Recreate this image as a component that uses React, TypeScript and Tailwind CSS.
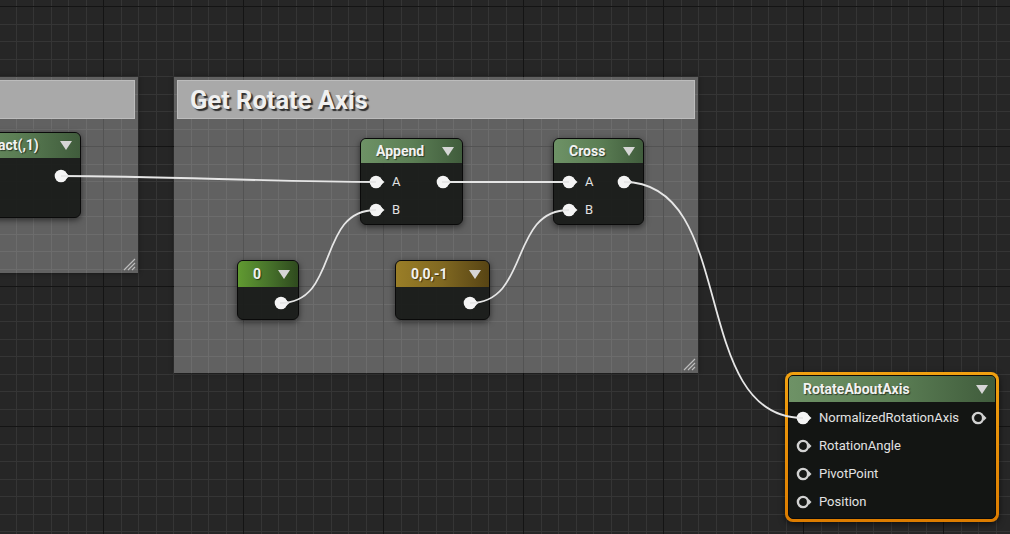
import React from 'react';

const W = 1010;
const H = 534;

// grid lines of the graph canvas (17.5px cells, a darker line every 8 cells)
const mod8 = (k: number) => ((k % 8) + 8) % 8;
const gridX = Array.from({ length: 60 }, (_, i) => i - 6).map((k) => ({ k, p: Math.round(103.3 + k * 17.5) + 0.5 }));
const gridY = Array.from({ length: 32 }, (_, i) => i).map((k) => ({ k, p: Math.round(6 + k * 17.5) + 0.5 }));

const Grid: React.FC = () => (
  <svg width={W} height={H} className="absolute inset-0" shapeRendering="crispEdges">
    {gridX.filter((g) => mod8(g.k) !== 0).map((g) => (
      <line key={`mx${g.k}`} x1={g.p} y1={0} x2={g.p} y2={H} stroke="#353535" strokeWidth="1" />
    ))}
    {gridY.filter((g) => mod8(g.k) !== 0).map((g) => (
      <line key={`my${g.k}`} x1={0} y1={g.p} x2={W} y2={g.p} stroke="#353535" strokeWidth="1" />
    ))}
    {gridX.filter((g) => mod8(g.k) === 0).map((g) => (
      <line key={`Mx${g.k}`} x1={g.p} y1={0} x2={g.p} y2={H} stroke="#141414" strokeWidth="1" />
    ))}
    {gridY.filter((g) => mod8(g.k) === 0).map((g) => (
      <line key={`My${g.k}`} x1={0} y1={g.p} x2={W} y2={g.p} stroke="#141414" strokeWidth="1" />
    ))}
  </svg>
);

const Pin: React.FC<{ filled?: boolean }> = ({ filled = true }) => (
  <svg width="16" height="14" viewBox="0 0 16 14" className="shrink-0">
    {filled ? (
      <>
        <circle cx="7" cy="7" r="6.3" fill="#f4f4f4" />
        <polygon points="12,4 15.5,7 12,10" fill="#f4f4f4" />
      </>
    ) : (
      <>
        <circle cx="7" cy="7" r="5.1" fill="#161816" stroke="#d2d2d2" strokeWidth="2.4" />
        <polygon points="12.6,4 15.5,7 12.6,10" fill="#d2d2d2" />
      </>
    )}
  </svg>
);

const Caret: React.FC = () => (
  <svg width="12" height="9" viewBox="0 0 12 9" className="shrink-0">
    <polygon points="0,0 12,0 6,9" fill="#d6d6d6" />
  </svg>
);

const Grip: React.FC = () => (
  <svg width="14" height="14" viewBox="0 0 14 14" className="absolute bottom-[2px] right-[2px]">
    <path d="M2 13 L13 2 M6 13 L13 6 M10 13 L13 10" stroke="#bdbdbd" strokeWidth="1.2" />
  </svg>
);

type NodeProps = {
  className: string;
  header: string;
  headerH: string;
  title: string;
  children: React.ReactNode;
};

const Node: React.FC<NodeProps> = ({ className, header, headerH, title, children }) => (
  <div className={`rounded-[6px] border border-[#0a0a0a] bg-[#161816]/90 shadow-[0_2px_6px_rgba(0,0,0,0.55)] ${className}`}>
    <div className={`flex items-center justify-between gap-3 rounded-t-[5px] pl-[15px] pr-[8px] ${headerH} ${header}`}>
      <span className="whitespace-nowrap text-[14px] font-bold text-[#f2f2f2] [text-shadow:1px_1px_1px_rgba(0,0,0,0.55)]">{title}</span>
      <Caret />
    </div>
    {children}
  </div>
);

const Row: React.FC<{ label?: string; input?: boolean; output?: boolean; filledIn?: boolean; filledOut?: boolean; pad: string }> = ({
  label,
  input,
  output,
  filledIn = true,
  filledOut = true,
  pad,
}) => (
  <div className={`flex h-[28px] items-center justify-between ${pad}`}>
    <div className="flex items-center gap-[7px]">
      {input && <Pin filled={filledIn} />}
      {label && <span className="text-[13px] text-[#e2e2e2]">{label}</span>}
    </div>
    {output && <Pin filled={filledOut} />}
  </div>
);

const greenHeader = 'bg-linear-to-r from-[#6e9266] via-[#5c7f55] to-[#405c3c]';

type WireProps = { x1: number; y1: number; x2: number; y2: number; t: number };
const wires: WireProps[] = [
  { x1: 61, y1: 176, x2: 376, y2: 182, t: 100 },
  { x1: 280, y1: 303, x2: 376, y2: 210, t: 60 },
  { x1: 442, y1: 182, x2: 569, y2: 182, t: 50 },
  { x1: 470, y1: 303, x2: 569, y2: 210, t: 60 },
  { x1: 624, y1: 182, x2: 803, y2: 418, t: 115 },
];

const Wires: React.FC = () => (
  <svg width={W} height={H} className="pointer-events-none absolute inset-0">
    {wires.map((w, i) => (
      <path
        key={i}
        d={`M${w.x1} ${w.y1} C${w.x1 + w.t} ${w.y1} ${w.x2 - w.t} ${w.y2} ${w.x2} ${w.y2}`}
        fill="none"
        stroke="#e6e6e6"
        strokeWidth="1.8"
      />
    ))}
  </svg>
);

const App: React.FC = () => {
  return (
    <div className="relative h-[534px] w-[1010px] overflow-hidden bg-[#262626] font-['Roboto',sans-serif]">
      <Grid />

      {/* comment boxes */}
      <div className="absolute left-[-200px] top-[77px] h-[196px] w-[338px] bg-white/[0.27] p-[3px] shadow-[0_0_5px_rgba(0,0,0,0.45)]">
        <div className="h-[39px] border border-[#bcbcbc] bg-[#a9a9a9]" />
        <Grip />
      </div>
      <div className="absolute left-[174px] top-[77px] h-[296px] w-[524px] bg-white/[0.27] p-[3px] shadow-[0_0_5px_rgba(0,0,0,0.45)]">
        <div className="flex h-[39px] items-center border border-[#bcbcbc] bg-[#a9a9a9] pl-[12px] pt-[3px]">
          <span className="text-[25.5px] font-bold leading-none text-[#f0f0f0] [text-shadow:2px_2px_1px_#303030]">Get Rotate Axis</span>
        </div>
        <Grip />
      </div>

      {/* nodes */}
      <Node className="absolute left-[-52px] top-[132px] w-[133px] pb-[27px]" header={greenHeader} headerH="h-[25px]" title="Subtract(,1)">
        <div className="pt-[4px]">
          <Row output pad="pl-[8px] pr-[10px]" />
        </div>
      </Node>

      <Node className="absolute left-[360px] top-[138px] w-[103px]" header={greenHeader} headerH="h-[24px]" title="Append">
        <div className="pt-[5px]">
          <Row label="A" input output pad="pl-[8px] pr-[10px]" />
          <Row label="B" input pad="pl-[8px] pr-[10px]" />
        </div>
      </Node>

      <Node className="absolute left-[553px] top-[138px] w-[91px]" header={greenHeader} headerH="h-[24px]" title="Cross">
        <div className="pt-[5px]">
          <Row label="A" input output pad="pl-[8px] pr-[10px]" />
          <Row label="B" input pad="pl-[8px] pr-[10px]" />
        </div>
      </Node>

      <Node
        className="absolute left-[237px] top-[260px] w-[62px]"
        header="bg-linear-to-r from-[#619a31] via-[#48742b] to-[#2f4a1e]"
        headerH="h-[26px]"
        title="0"
      >
        <div className="flex h-[32px] items-center justify-end pr-[8px]">
          <Pin />
        </div>
      </Node>

      <Node
        className="absolute left-[395px] top-[260px] w-[95px]"
        header="bg-linear-to-r from-[#9a7e27] via-[#806821] to-[#574414]"
        headerH="h-[26px]"
        title="0,0,-1"
      >
        <div className="flex h-[32px] items-center justify-end pr-[10px]">
          <Pin />
        </div>
      </Node>

      <div className="absolute left-[785px] top-[372px] w-[214px] rounded-[8px] bg-linear-to-b from-[#f0a010] to-[#dc7c00] p-[3px] shadow-[0_2px_6px_rgba(0,0,0,0.6)]">
        <div className="rounded-[5px] border border-[#0a0a0a] bg-[#131513]">
          <div className={`flex h-[26px] items-center justify-between rounded-t-[4px] pl-[14px] pr-[7px] ${greenHeader}`}>
            <span className="text-[14px] font-bold text-[#f2f2f2] [text-shadow:1px_1px_1px_rgba(0,0,0,0.55)]">RotateAboutAxis</span>
            <Caret />
          </div>
          <div className="pb-[2px] pt-[2px]">
            <Row label="NormalizedRotationAxis" input output filledOut={false} pad="pl-[7px] pr-[8px]" />
            <Row label="RotationAngle" input filledIn={false} pad="pl-[7px] pr-[8px]" />
            <Row label="PivotPoint" input filledIn={false} pad="pl-[7px] pr-[8px]" />
            <Row label="Position" input filledIn={false} pad="pl-[7px] pr-[8px]" />
          </div>
        </div>
      </div>

      <Wires />
    </div>
  );
};

export default App;
